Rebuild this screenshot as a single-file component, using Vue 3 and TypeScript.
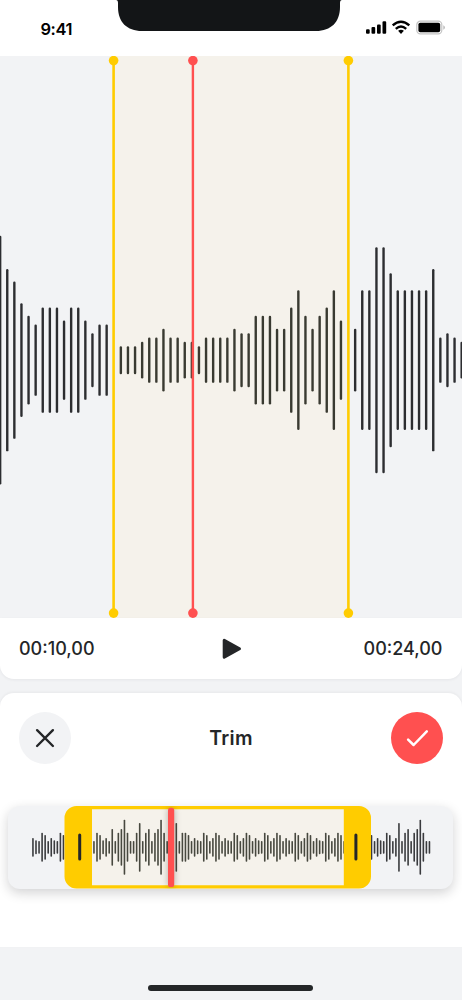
<script setup lang="ts">
interface Bar {
  x: number
  y: number
  h: number
  fill: string
}

interface Zone {
  from: number
  to: number
  inside: string
  outside: string
}

const waveHeights: number[] = [
  248.7, 182.3, 157.3, 113.7, 88.7, 71.3, 105.3, 105.3, 105.3, 79.3, 105.3, 105.3, 79.3, 54, 71.3, 71.3,
  37, 28, 28, 28, 36.7, 45.3, 45.3, 62.7, 45.3, 45.3, 36.7, 36.7, 28, 45.3, 45.3, 45.3, 45.3, 62.7, 54, 54,
  88.7, 88.7, 88.7, 62.7, 62.7, 105.3, 139.7, 88.7, 62.7, 88.7, 105.3, 139.7, 79.3, 62.7, 62.7,
  139.7, 139.7, 226, 226, 174, 139.7, 139.7, 139.7, 139.7, 139.7, 182.3, 45.3, 54, 45.3, 36.7,
]

const levels: Record<string, number> = { A: 18.7, B: 14, C: 12.7, D: 29, E: 24.7, F: 36.7, G: 48.7, H: 55 }

const overview: string = [
  'ABCDECABCDE',
  'CABCDECAB',
  'CDEBACFCD',
  'FHDCCDGCDFCDFHDCCCGCDDECABC',
  'DECADECABC'.repeat(6),
  'DECAGCDFCDFHDCC',
].join('')

function buildBars(heights: number[], start: number, pitch: number, middle: number, zone: Zone): Bar[] {
  return heights.map((h, i) => {
    const x = start + pitch * i
    return { x, y: middle - h / 2, h, fill: x > zone.from && x < zone.to ? zone.inside : zone.outside }
  })
}

// Bars that fall under a yellow marker are left to the marker itself.
const mainBars = buildBars(waveHeights, 0.15, 7.1, 304.2, {
  from: 112,
  to: 349,
  inside: '#393a31',
  outside: '#2c2d30',
}).filter((b) => Math.abs(b.x - 113.6) > 1 && Math.abs(b.x - 348.4) > 1)

const miniBars = buildBars([...overview].map((c) => levels[c]), 24.95, 3.05, 41.3, {
  from: 80,
  to: 340,
  inside: '#47483f',
  outside: '#3a3b3e',
})
</script>

<template>
  <main class="screen">
    <header class="status">
      <div class="clock">9:41</div>
      <svg class="notch" width="226" height="31" viewBox="0 0 226 31">
        <path d="M0 0Q2 0 2 3V7C2 22 11 31 26 31H200C215 31 224 22 224 7V3Q224 0 226 0Z" fill="#131517" />
      </svg>
      <svg class="signals" width="84" height="16" viewBox="0 0 84 16">
        <g fill="#000">
          <rect x="1" y="9.3" width="3.7" height="4.5" rx="1.1" />
          <rect x="6.5" y="7" width="3.7" height="6.8" rx="1.1" />
          <rect x="12" y="4.4" width="3.7" height="9.4" rx="1.1" />
          <rect x="17.5" y="1.3" width="3.7" height="12.5" rx="1.1" />
        </g>
        <g fill="none" stroke="#000" stroke-width="2.4">
          <path d="M27.7 5.4Q36 -2 44.3 5.4" />
          <path d="M30.8 8.8Q36 4.2 41.2 8.8" />
        </g>
        <path d="M33.1 10.8Q36 8.5 38.9 10.8L36 13.9Z" fill="#000" />
        <rect x="51.8" y="1.2" width="25" height="12.6" rx="3.6" fill="none" stroke="#c4c4c4" stroke-width="1.2" />
        <rect x="53.4" y="2.8" width="21.8" height="9.4" rx="1.8" fill="#000" />
        <path d="M78.3 5.2Q80 6 80 7.5T78.3 9.8Z" fill="#bbb" />
      </svg>
    </header>

    <section class="wave">
      <svg width="462" height="562" viewBox="0 0 462 562">
        <rect x="113.6" y="0" width="234.8" height="562" fill="#f5f2eb" />
        <rect
          v-for="(b, i) in mainBars"
          :key="i"
          :x="b.x - 1.2"
          :y="b.y"
          width="2.4"
          :height="b.h"
          rx="1.2"
          :fill="b.fill"
        />
        <g fill="#fc0" stroke="#fc0" stroke-width="2.6">
          <path d="M113.6 4V557M348.4 4V557" />
          <g stroke="none">
            <circle cx="113.6" cy="4.6" r="4.8" />
            <circle cx="113.6" cy="557.1" r="4.8" />
            <circle cx="348.4" cy="4.6" r="4.8" />
            <circle cx="348.4" cy="557.1" r="4.8" />
          </g>
        </g>
        <path d="M192.9 4V557" stroke="#ff5050" stroke-width="2.4" />
        <circle cx="192.9" cy="4.6" r="4.8" fill="#ff5050" />
        <circle cx="192.9" cy="557.1" r="4.8" fill="#ff5050" />
      </svg>
    </section>

    <section class="times">
      <span class="time">00:10,00</span>
      <svg class="play" width="20" height="22" viewBox="0 0 20 22">
        <path d="M2.2 2.4V19.2L17.5 10.8Z" fill="#242628" stroke="#242628" stroke-width="3" stroke-linejoin="round" />
      </svg>
      <span class="time end">00:24,00</span>
    </section>

    <section class="editor">
      <div class="toolbar">
        <button class="round" aria-label="Cancel">
          <svg width="52" height="52" viewBox="0 0 52 52">
            <path d="M18.1 18.2L33.9 34M33.9 18.2L18.1 34" fill="none" stroke="#242628" stroke-width="2.4" stroke-linecap="round" />
          </svg>
        </button>
        <h1>Trim</h1>
        <button class="round confirm" aria-label="Apply">
          <svg width="52" height="52" viewBox="0 0 52 52">
            <path d="M17.1 27.6L22.6 33L35.8 19.3" fill="none" stroke="#fff" stroke-width="2.5" stroke-linecap="round" stroke-linejoin="round" />
          </svg>
        </button>
      </div>
      <div class="track">
        <svg width="445" height="83" viewBox="0 0 445 83">
          <rect x="80" y="1" width="260" height="80" fill="#f5f2eb" />
          <rect
            v-for="(b, i) in miniBars"
            :key="i"
            :x="b.x - 0.8"
            :y="b.y"
            width="1.6"
            :height="b.h"
            rx="0.7"
            :fill="b.fill"
          />
          <path
            fill="#fc0"
            fill-rule="evenodd"
            d="M68.5 0H351A12 12 0 0 1 363 12V70.5A12 12 0 0 1 351 82.5H68.5A12 12 0 0 1 56.5 70.5V12A12 12 0 0 1 68.5 0ZM84 3.2V79.2H335.8V3.2Z"
          />
          <path d="M71.7 29V53M347.9 29V53" stroke="#242628" stroke-width="3" stroke-linecap="round" />
          <rect class="needle" x="160" y="1.7" width="6.2" height="79.4" rx="2.6" fill="#ff5050" />
        </svg>
      </div>
    </section>

    <footer class="home"><i></i></footer>
  </main>
</template>

<style>
body {
  margin: 0;
}
</style>

<style scoped>
.screen {
  width: 462px;
  height: 1000px;
  display: flex;
  flex-direction: column;
  overflow: hidden;
  background: #f2f3f5;
  color: #242628;
  font-family: Inter, "Liberation Sans", sans-serif;
}
svg {
  display: block;
}
.status {
  height: 56px;
  flex: none;
  display: grid;
  grid-template-columns: 116px 226px 120px;
  align-items: start;
  background: #fff;
}
.clock {
  padding: 18px 0 0 40.5px;
  color: #000;
  font-size: 16.5px;
  line-height: 22px;
  font-weight: 600;
  letter-spacing: -0.45px;
}
.signals {
  margin: 20px 0 0 23px;
}
.wave {
  height: 562px;
  flex: none;
}
.times {
  height: 61px;
  flex: none;
  box-sizing: border-box;
  padding: 0 19.5px 0 19px;
  display: grid;
  grid-template-columns: 1fr 20px 1fr;
  align-items: center;
  background: #fff;
  border-radius: 0 0 14px 14px;
  box-shadow: 0 1px 3px rgba(30, 35, 45, 0.06);
}
.play {
  margin-left: 1.5px;
}
.time {
  font-size: 18px;
  line-height: 24px;
  font-weight: 500;
}
.end {
  text-align: right;
}
.editor {
  margin-top: 14px;
  height: 254px;
  flex: none;
  background: #fff;
  border-radius: 14px 14px 0 0;
  box-shadow: 0 -1px 3px rgba(30, 35, 45, 0.05);
}
.toolbar {
  padding: 19px 19px 0;
  display: flex;
  align-items: center;
  justify-content: space-between;
}
h1 {
  margin: 0;
  font-size: 19.5px;
  line-height: 24px;
  font-weight: 600;
  letter-spacing: 0.3px;
}
.round {
  width: 52px;
  height: 52px;
  padding: 0;
  border: 0;
  border-radius: 50%;
  background: #f2f3f5;
}
.confirm {
  background: #ff5050;
}
.track {
  width: 445px;
  height: 82.5px;
  margin: 42px 0 0 8px;
  border-radius: 12px;
  background: #f2f3f5;
  box-shadow: 0 4px 12px rgba(20, 20, 25, 0.19);
}
.needle {
  filter: drop-shadow(0 0 3px rgba(50, 40, 30, 0.35));
}
.home {
  flex: 1;
  display: flex;
  justify-content: center;
  align-items: flex-end;
}
.home i {
  width: 165px;
  height: 6px;
  margin: 0 1px 9.5px 0;
  border-radius: 3px;
  background: #242628;
}
</style>
